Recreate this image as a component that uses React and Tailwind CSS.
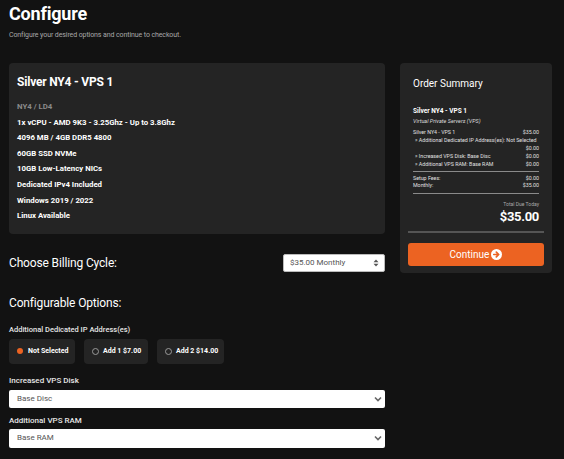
import React from "react";

function UpDown() {
  return (
    <svg width="6" height="8" viewBox="0 0 6 8" className="shrink-0">
      <path d="M3 0.5 L5.5 3.2 H0.5 Z" fill="#555" />
      <path d="M3 7.5 L5.5 4.8 H0.5 Z" fill="#555" />
    </svg>
  );
}

function Chevron() {
  return (
    <svg width="8" height="6" viewBox="0 0 8 6" className="shrink-0">
      <path d="M1 1.5 L4 4.5 L7 1.5" fill="none" stroke="#666" strokeWidth="1.6" />
    </svg>
  );
}

function ArrowCircle() {
  return (
    <svg width="11" height="11" viewBox="0 0 12 12" className="shrink-0">
      <circle cx="6" cy="6" r="6" fill="#fff" />
      <path d="M3 6 H8.2 M5.8 3.4 L8.4 6 L5.8 8.6" fill="none" stroke="#ec6322" strokeWidth="1.8" strokeLinecap="round" strokeLinejoin="round" />
    </svg>
  );
}

const specs = [
  "1x vCPU - AMD 9K3 - 3.25Ghz - Up to 3.8Ghz",
  "4096 MB / 4GB DDR5 4800",
  "60GB SSD NVMe",
  "10GB Low-Latency NICs",
  "Dedicated IPv4 Included",
  "Windows 2019 / 2022",
  "Linux Available",
];

function Radio({ label, selected, w }) {
  return (
    <div className={`h-[25px] ${w} bg-[#242424] rounded-[4px] flex items-center pl-[8px] gap-[4px]`}>
      {selected ? (
        <span className="w-[6px] h-[6px] rounded-full bg-[#ec6322] mr-[1px]" />
      ) : (
        <span className="w-[7px] h-[7px] rounded-full border border-[#999]" />
      )}
      <span className="text-[7px] font-bold leading-[10px] text-white">{label}</span>
    </div>
  );
}

export default function App() {
  return (
    <div className="min-h-[459px] bg-[#121212] font-['Roboto',sans-serif] text-white pl-[9px] pt-[2px]">
      <h1 className="text-[18px] font-bold leading-[24px] tracking-[-0.2px]">Configure</h1>
      <p className="text-[7px] leading-[10px] mt-[4px] text-[#a8a8a8] tracking-[-0.1px]">
        Configure your desired options and continue to checkout.
      </p>
      <div className="flex gap-[15px] mt-[23px] items-start">
        <div className="w-[376px]">
          <div className="bg-[#242424] rounded-[4px] pl-[8px] pt-[11px] pb-[10px]">
            <div className="text-[12px] font-bold leading-[16px] tracking-[-0.2px]">Silver NY4 - VPS 1</div>
            <div className="mt-[9px] text-[7.8px] font-bold leading-[15.6px]">
              <div className="text-[#8a8a8a]">NY4 / LD4</div>
              {specs.map((s) => (
                <div key={s}>{s}</div>
              ))}
            </div>
          </div>

          <div className="mt-[20px] flex items-start justify-between">
            <div className="text-[12px] leading-[16px] pt-[1px] tracking-[-0.15px]">Choose Billing Cycle:</div>
            <div className="w-[102px] h-[18px] bg-white border border-[#bbb] rounded-[2px] flex items-center justify-between pl-[6px] pr-[5px]">
              <span className="text-[8px] text-[#555] leading-[10px]">$35.00 Monthly</span>
              <UpDown />
            </div>
          </div>

          <div className="mt-[23px] text-[12px] leading-[16px] tracking-[-0.15px]">Configurable Options:</div>
          <div className="mt-[14px] text-[7.5px] leading-[10px] font-medium text-[#e6e6e6]">
            Additional Dedicated IP Address(es)
          </div>
          <div className="mt-[4px] flex gap-[9px]">
            <Radio label="Not Selected" selected w="w-[66px]" />
            <Radio label="Add 1 $7.00" w="w-[64px]" />
            <Radio label="Add 2 $14.00" w="w-[67px]" />
          </div>

          <div className="mt-[12px] text-[8px] leading-[10px] font-medium text-[#e6e6e6]">Increased VPS Disk</div>
          <div className="mt-[4px] h-[18px] bg-white rounded-[2px] flex items-center justify-between pl-[8px] pr-[3px]">
            <span className="text-[8px] text-[#555] leading-[10px]">Base Disc</span>
            <Chevron />
          </div>

          <div className="mt-[8px] text-[8px] leading-[10px] font-medium text-[#e6e6e6]">Additional VPS RAM</div>
          <div className="mt-[3px] h-[19px] bg-white rounded-[2px] flex items-center justify-between pl-[8px] pr-[3px]">
            <span className="text-[8px] text-[#555] leading-[10px]">Base RAM</span>
            <Chevron />
          </div>
        </div>

        <div className="w-[152px] bg-[#242424] rounded-[4px] px-[8px] pt-[14px] pb-[7px]">
          <div className="px-[5px]">
            <div className="text-[10px] leading-[14px]">Order Summary</div>
            <div className="mt-[16px] text-[6.5px] font-bold leading-[8px]">Silver NY4 - VPS 1</div>
            <div className="mt-[2px] text-[5.5px] italic leading-[8px] text-[#ddd]">Virtual Private Servers (VPS)</div>
            <div className="mt-[3px] text-[5.3px] leading-[8px] text-[#e0e0e0]">
              <div className="flex justify-between">
                <span>Silver NY4 - VPS 1</span>
                <span>$35.00</span>
              </div>
              <div className="pl-[2px] whitespace-nowrap">» Additional Dedicated IP Address(es): Not Selected</div>
              <div className="flex justify-end">
                <span>$0.00</span>
              </div>
              <div className="flex justify-between pl-[2px]">
                <span>» Increased VPS Disk: Base Disc</span>
                <span>$0.00</span>
              </div>
              <div className="flex justify-between pl-[2px]">
                <span>» Additional VPS RAM: Base RAM</span>
                <span>$0.00</span>
              </div>
            </div>
            <div className="mt-[3px] h-px bg-[#8a8a8a]" />
            <div className="mt-[3px] text-[5.3px] leading-[7px] text-[#e0e0e0]">
              <div className="flex justify-between">
                <span>Setup Fees:</span>
                <span>$0.00</span>
              </div>
              <div className="flex justify-between">
                <span>Monthly:</span>
                <span>$35.00</span>
              </div>
            </div>
            <div className="mt-[4px] h-px bg-[#8a8a8a]" />
            <div className="mt-[7px] text-right text-[5px] leading-[7px] text-[#aaa]">Total Due Today</div>
            <div className="text-right text-[13px] font-bold leading-[17px] tracking-[-0.3px]">$35.00</div>
          </div>
          <div className="mt-[6px] h-[2px] bg-[#555]" />
          <button className="mt-[10px] w-full h-[23px] bg-[#ec6322] rounded-[3px] flex items-center justify-center gap-[2px] text-[10px] leading-[14px] text-white">
            <span>Continue</span>
            <ArrowCircle />
          </button>
        </div>
      </div>
    </div>
  );
}
